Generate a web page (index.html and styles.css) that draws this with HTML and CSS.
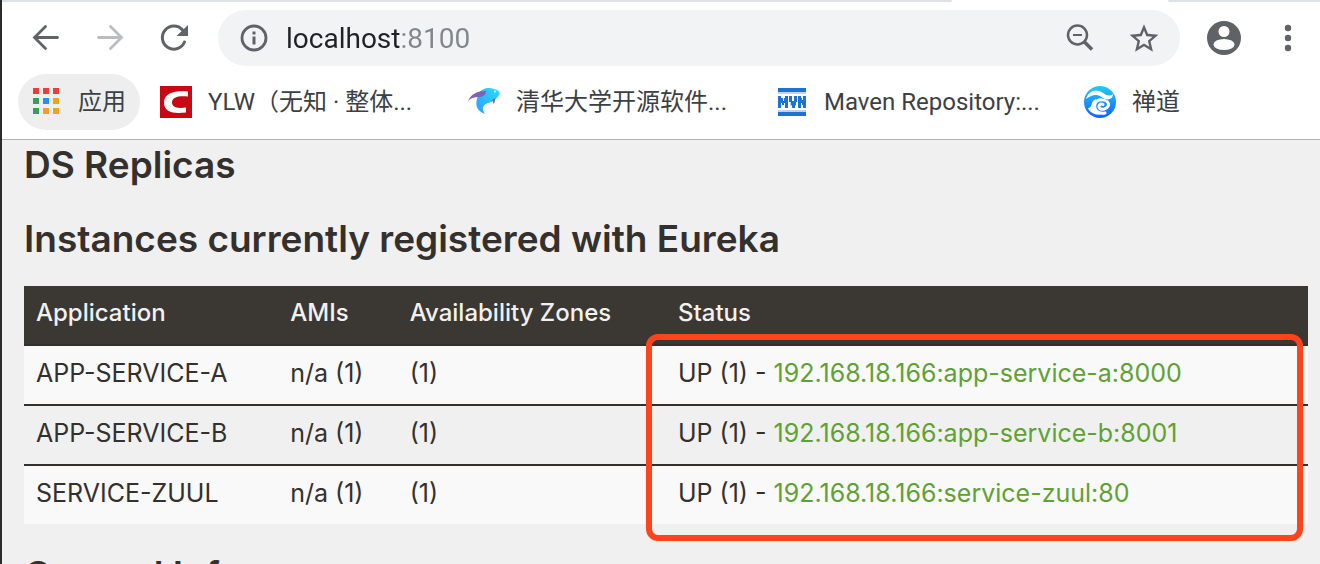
FILE: index.html
```html
<!DOCTYPE html>
<html lang="zh-CN">
<head>
    <meta charset="UTF-8">
    <title>Eureka</title>
    <link rel="stylesheet" href="styles.css">
</head>
<body>
    <div class="tabs">
        <div class="tabs-before"></div>
        <div class="tab-active"></div>
        <div class="tabs-after"></div>
    </div>

    <div class="toolbar">
        <button class="tool" aria-label="Back">
            <svg width="32" height="32" viewBox="0 0 32 32" fill="none" stroke="#5f6368" stroke-width="2.800" stroke-linecap="round">
                <path d="M27.500 15.500H4.500M15.500 4.500L4.500 15.500L15.500 26.500"/>
            </svg>
        </button>
        <button class="tool" aria-label="Forward">
            <svg width="32" height="32" viewBox="0 0 32 32" fill="none" stroke="#bcbdbf" stroke-width="2.800" stroke-linecap="round">
                <path d="M4.500 15.500H27.500M16.500 4.500L27.500 15.500L16.500 26.500"/>
            </svg>
        </button>
        <button class="tool" aria-label="Reload">
            <svg width="32" height="32" viewBox="0 0 32 32">
                <path d="M24.500 8A11.500 11.500 0 1 0 26.500 20" fill="none" stroke="#5f6368" stroke-width="3" stroke-linecap="round"/>
                <path d="M30 3V14H18.500Z" fill="#5f6368"/>
            </svg>
        </button>
        <form class="omnibox">
            <svg width="28" height="28" viewBox="0 0 28 28">
                <circle cx="14" cy="14" r="12" fill="none" stroke="#5f6368" stroke-width="2.800"/>
                <path d="M12.500 7.500h3v3h-3zM12.500 12.500h3v8h-3z" fill="#5f6368"/>
            </svg>
            <input class="address" type="text" value="localhost:8100" aria-label="Address" spellcheck="false">
            <button class="inner" type="button" aria-label="Zoom">
                <svg width="32" height="32" viewBox="0 0 32 32" fill="none" stroke="#5f6368">
                    <circle cx="13.500" cy="13" r="9.500" stroke-width="2.500"/>
                    <path d="M9 13H18" stroke-width="2"/>
                    <path d="M20 19.500L28 27.500" stroke-width="3.500"/>
                </svg>
            </button>
            <button class="inner" type="button" aria-label="Bookmark this page">
                <svg width="32" height="32" viewBox="0 0 24 24" fill="#5f6368">
                    <path d="M22.800 9.500l-7.800-.700L12 1.600 9 8.800l-7.800.700 5.900 5.100-1.800 7.700L12 18.200l6.700 4.100-1.800-7.700zM12 16.200l-4 2.400 1.100-4.500-3.500-3 4.600-.400L12 6.400l1.800 4.300 4.600.400-3.500 3L16 18.600z"/>
                </svg>
            </button>
        </form>
        <button class="tool" aria-label="Profile">
            <svg width="36" height="36" viewBox="0 0 36 36">
                <circle cx="18" cy="18" r="17" fill="#5f6368"/>
                <circle cx="18" cy="11.500" r="5.500" fill="#fff"/>
                <ellipse cx="18" cy="24.500" rx="10.500" ry="5.500" fill="#fff"/>
            </svg>
        </button>
        <button class="tool" aria-label="Menu">
            <svg width="32" height="32" viewBox="0 0 32 32" fill="#5f6368">
                <circle cx="16" cy="6" r="3.200"/>
                <circle cx="16" cy="16" r="3.200"/>
                <circle cx="16" cy="26" r="3.200"/>
            </svg>
        </button>
    </div>

    <nav class="bookmarks">
        <a class="bookmark apps" href="#">
            <svg width="32" height="32" viewBox="0 0 32 32">
                <path d="M3 2h6v6H3zM13 2h6v6h-6zM23 2h6v6h-6z" fill="#f23a3a"/>
                <path d="M3 12h6v6H3zM3 22h6v6H3z" fill="#34a05a"/>
                <path d="M13 12h6v6h-6z" fill="#2490f5"/>
                <path d="M23 12h6v6h-6zM13 22h6v6h-6zM23 22h6v6h-6z" fill="#f0a022"/>
            </svg>
            <span>应用</span>
        </a>
        <a class="bookmark" href="#">
            <svg width="32" height="32" viewBox="0 0 32 32">
                <path d="M0 0h32v32H0z" fill="#c90813"/>
                <path d="M28 5.500C17 4.500 4 6 4 16.500C4 26.500 14 28 26 26.500V21.500C19 22.500 12 22 12 16.500C12 11 19 9.500 28 10.500Z" fill="#fff"/>
            </svg>
            <span class="label">YLW（无知 · 整体...</span>
        </a>
        <a class="bookmark" href="#">
            <svg width="32" height="32" viewBox="0 0 32 32">
                <defs>
                    <linearGradient id="fish" x1="1" y1="0" x2="0" y2="1">
                        <stop offset="0" stop-color="#27e0fa"/>
                        <stop offset="1" stop-color="#2f9cff"/>
                    </linearGradient>
                </defs>
                <path d="M10 8C14 2 21 1 26 3C31 4 33 7 31 9C29 13 25 16 20 17C15 19 13 22 17 28C9 25 7 19 9 13Z" fill="url(#fish)"/>
                <path d="M0 15C3 8 9 5 18 5C18 9 15 11 10 11C6 11 3 12 0 15Z" fill="#8060b8"/>
                <path d="M24 14L27 12C27 15 27 16 25.500 18C25 16 25 15 24 14Z" fill="#8060b8"/>
                <circle cx="27" cy="5.500" r="1" fill="#fff"/>
            </svg>
            <span class="label">清华大学开源软件...</span>
        </a>
        <a class="bookmark" href="#">
            <svg width="32" height="32" viewBox="0 0 32 32" shape-rendering="crispEdges">
                <path d="M2 2h28v4H2zM2 26h28v4H2z" fill="#1c73d2"/>
                <path d="M2 6h28v2H2zM2 24h28v2H2zM14 16h6v4h-6z" fill="#c9d3df"/>
                <path d="M2 10h3v2h2v3h1v-3h1v-2h3v12H9v-5H8v2H6v-2H5v5H2zM13 10h3v5h2v-5h3v6h-1v3h-1v3h-3v-3h-1v-3h-2zM22 10h3v2h1v2h1v-4h3v12h-3v-3h-1v-2h-1v5h-3z" fill="#1c73d2"/>
            </svg>
            <span class="label">Maven Repository:...</span>
        </a>
        <a class="bookmark" href="#">
            <svg width="32" height="32" viewBox="0 0 32 32">
                <defs>
                    <linearGradient id="wave" x1="0" y1="0" x2="0" y2="1">
                        <stop offset="0" stop-color="#20cdfb"/>
                        <stop offset="1" stop-color="#1262fb"/>
                    </linearGradient>
                </defs>
                <circle cx="16" cy="16" r="16" fill="url(#wave)"/>
                <path d="M2 13C4 6 10 3 15 5C21 7 23 12 29 8C29 13 24 15 19 12C14 8 9 8 2 13Z" fill="#fff"/>
                <path d="M19 18.500C16 17 14 20 15.500 22C18 25 25 22 24.500 18C23 13 13 12 11 18C9.500 24 14 28 21 27" fill="none" stroke="#fff" stroke-width="3" stroke-linecap="round"/>
                <path d="M4 22C9 22 6 15 12 13L12 18C10 23 13 27 19 28C12 30 6 27 4 22Z" fill="#fff"/>
            </svg>
            <span>禅道</span>
        </a>
    </nav>

    <main>
        <h1>DS Replicas</h1>
        <h1>Instances currently registered with Eureka</h1>
        <div class="instances">
            <table>
                <thead>
                    <tr>
                        <th class="col-app">Application</th>
                        <th class="col-ami">AMIs</th>
                        <th class="col-zone">Availability Zones</th>
                        <th>Status</th>
                    </tr>
                </thead>
                <tbody>
                    <tr>
                        <td>APP-SERVICE-A</td>
                        <td>n/a (1)</td>
                        <td>(1)</td>
                        <td>UP (1) - <a href="#">192.168.18.166:app-service-a:8000</a></td>
                    </tr>
                    <tr>
                        <td>APP-SERVICE-B</td>
                        <td>n/a (1)</td>
                        <td>(1)</td>
                        <td>UP (1) - <a href="#">192.168.18.166:app-service-b:8001</a></td>
                    </tr>
                    <tr>
                        <td>SERVICE-ZUUL</td>
                        <td>n/a (1)</td>
                        <td>(1)</td>
                        <td>UP (1) - <a href="#">192.168.18.166:service-zuul:80</a></td>
                    </tr>
                </tbody>
            </table>
            <div class="highlight"></div>
        </div>
        <h1>General Info</h1>
    </main>
</body>
</html>
```
FILE: styles.css
```css
* {
    box-sizing: border-box;
}
body {
    display: flex;
    flex-direction: column;
    height: 100vh;
    margin: 0;
    overflow: hidden;
    border-left: 2px solid #2b2b2d;
    background: #fff;
    font-family: Inter, "Noto Sans CJK SC", sans-serif;
}
button {
    display: flex;
    align-items: center;
    justify-content: center;
    padding: 0;
    border: 0;
    background: none;
}
svg {
    flex: none;
}

/* tab strip */
.tabs {
    display: flex;
    flex: none;
    height: 2px;
    background: #fff;
}
.tabs-before {
    flex: 1;
    background: #dee1e6;
    border-bottom-right-radius: 4px;
}
.tab-active {
    width: 216px;
}
.tabs-after {
    width: 152px;
    background: #dee1e6;
    border-bottom-left-radius: 4px;
}

/* toolbar */
.toolbar {
    display: flex;
    flex: none;
    align-items: center;
    padding: 8px 0 8px 12px;
}
.tool {
    width: 64px;
    height: 56px;
}
.omnibox {
    display: flex;
    flex: 1;
    align-items: center;
    height: 56px;
    margin: 0 12px;
    padding: 0 20px 0 22px;
    border-radius: 28px;
    background: #f1f3f4;
}
.address {
    flex: 1;
    min-width: 0;
    margin-left: 18px;
    padding: 0;
    border: 0;
    outline: 0;
    font: 28px Roboto, sans-serif;
    /* host dark, port grey */
    color: transparent;
    background: linear-gradient(to right, #202124 114px, #80868b 114px);
    -webkit-background-clip: text;
    background-clip: text;
}
.inner {
    margin-left: 32px;
}

/* bookmarks bar */
.bookmarks {
    display: flex;
    flex: none;
    gap: 4px;
    padding: 0 16px 9px;
    border-bottom: 1px solid #b3b3b5;
}
.bookmark {
    display: flex;
    align-items: center;
    gap: 16px;
    height: 56px;
    padding: 0 24px 0 16px;
    border-radius: 28px;
    color: #3c4043;
    font-size: 24px;
    font-family: Roboto, "Noto Sans CJK SC", sans-serif;
    line-height: 28px;
    text-decoration: none;
    white-space: nowrap;
}
.apps {
    padding: 0 14px 0 12px;
    background: #eee;
}
.label {
    width: 216px;
}

/* page */
main {
    flex: 1;
    min-height: 0;
    overflow: hidden;
    padding: 5px 12px 0 22px;
    background: #f0f0f0;
    color: #34302d;
}
h1 {
    margin: 0 0 34px;
    font-size: 37px;
    font-weight: 600;
    line-height: 40px;
    white-space: nowrap;
}
.instances {
    position: relative;
    margin: -7px 0 31px;
}
table {
    width: 100%;
    border-collapse: collapse;
    table-layout: fixed;
    line-height: 34px;
}
th,
td {
    height: 60px;
    padding: 10px 12px 14px;
    font-size: 25px;
    text-align: left;
    white-space: nowrap;
}
th {
    height: 59px;
    background: #3b3833;
    color: #f1f1f1;
    font-size: 24px;
    font-weight: 500;
}
tbody tr {
    border-top: 2px solid #34302d;
    background: #f9f9f9;
}
tbody tr:nth-child(even) {
    background: #f0f0f0;
}
tbody tr:last-child td {
    height: 59px;
}
td a {
    color: #5fa134;
    text-decoration: none;
}
.col-app {
    width: 19.8%;
}
.col-ami {
    width: 9.3%;
}
.col-zone {
    width: 20.9%;
}
.highlight {
    position: absolute;
    top: 48px;
    right: 5px;
    bottom: -17px;
    left: calc(50% - 20px);
    border: 6px solid #ff431c;
    border-radius: 12px;
    pointer-events: none;
}
```
